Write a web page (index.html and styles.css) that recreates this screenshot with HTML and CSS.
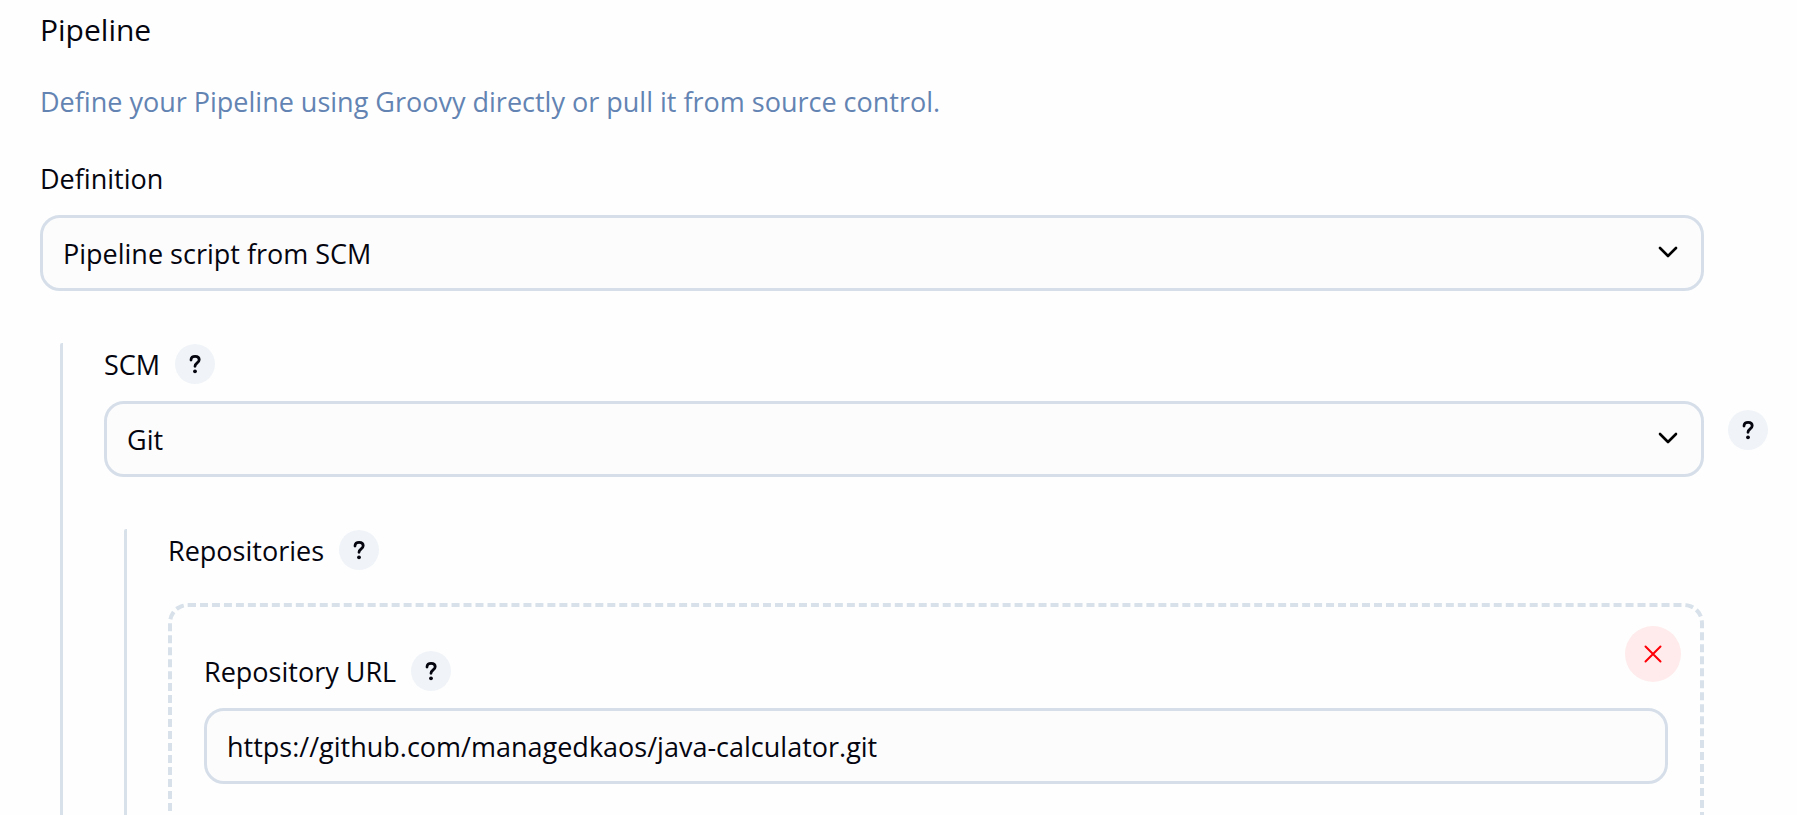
FILE: index.html
```html
<!DOCTYPE html>
<html lang="en">
<head>
<meta charset="utf-8">
<title>Pipeline</title>
<link rel="stylesheet" href="styles.css">
</head>
<body>
<svg class="symbols" aria-hidden="true">
  <symbol id="icon-chevron" viewBox="0 0 24 24">
    <path d="M4 8l8 8 8-8" fill="none" stroke="currentColor" stroke-width="2.600" stroke-linecap="round" stroke-linejoin="round"/>
  </symbol>
  <symbol id="icon-help" viewBox="0 0 24 24">
    <path d="M8 8C8 5.400 9.700 4.300 12.100 4.300C14.700 4.300 16.200 5.700 16.200 7.800C16.200 10.900 12 11 12 14.300" fill="none" stroke="currentColor" stroke-width="2.800" stroke-linecap="round" stroke-linejoin="round"/>
    <circle cx="12" cy="19.300" r="1.900" fill="currentColor"/>
  </symbol>
  <symbol id="icon-close" viewBox="0 0 24 24">
    <path d="M4.500 4.500l15 15M19.500 4.500l-15 15" fill="none" stroke="currentColor" stroke-width="2" stroke-linecap="round"/>
  </symbol>
</svg>
<main class="page">
  <h1 class="title">Pipeline</h1>
  <p class="description">Define your Pipeline using Groovy directly or pull it from source control.</p>

  <label class="definition-label" for="definition">Definition</label>
  <div class="select">
    <select class="control" id="definition"><option>Pipeline script from SCM</option></select>
    <svg class="chevron"><use href="#icon-chevron"/></svg>
  </div>

  <section class="group">
    <div class="label-row">
      <label class="label" for="scm">SCM</label>
      <button class="help" type="button" aria-label="Help for SCM"><svg class="icon"><use href="#icon-help"/></svg></button>
    </div>
    <div class="select-row">
      <div class="select">
        <select class="control" id="scm"><option>Git</option></select>
        <svg class="chevron"><use href="#icon-chevron"/></svg>
      </div>
      <button class="help" type="button" aria-label="Help for Git"><svg class="icon"><use href="#icon-help"/></svg></button>
    </div>

    <section class="group">
      <div class="label-row">
        <span class="label">Repositories</span>
        <button class="help" type="button" aria-label="Help for Repositories"><svg class="icon"><use href="#icon-help"/></svg></button>
      </div>
      <div class="repository">
        <button class="remove" type="button" aria-label="Remove repository"><svg class="icon"><use href="#icon-close"/></svg></button>
        <div class="label-row">
          <label class="label" for="url">Repository URL</label>
          <button class="help" type="button" aria-label="Help for Repository URL"><svg class="icon"><use href="#icon-help"/></svg></button>
        </div>
        <input class="control" id="url" type="text" value="https://github.com/managedkaos/java-calculator.git" spellcheck="false">
      </div>
    </section>
  </section>
</main>
</body>
</html>
```
FILE: styles.css
```css
* {
  box-sizing: border-box;
}

body {
  margin: 0;
  background: #fefefe;
  color: #05050f;
  font: 27px/36px "Segoe UI", "Open Sans", "Noto Sans", sans-serif;
}

.symbols {
  position: absolute;
  width: 0;
  height: 0;
}

.page {
  height: 100vh;
  overflow: hidden;
  padding: 10px 93px 0 40px;
}

.title {
  margin: 0;
  font-size: 30px;
  font-weight: 400;
  line-height: 40px;
}

.description {
  margin: 34px 0 41px;
  color: #6384b3;
}

.definition-label {
  display: block;
  margin-bottom: 18px;
}

.control {
  display: block;
  width: 100%;
  height: 76px;
  margin: 0;
  padding: 0 20px;
  appearance: none;
  border: 3px solid #d6dfe9;
  border-radius: 20px;
  outline: none;
  background: #fcfcfd;
  color: inherit;
  font: inherit;
}

.select {
  position: relative;
  flex: 1;
}

.select .control {
  padding-top: 2px;
}

.chevron {
  position: absolute;
  top: 25px;
  right: 24px;
  width: 24px;
  height: 24px;
  color: #000;
  pointer-events: none;
}

.group {
  margin: 52px 0 0 20px;
  padding: 1px 0 0 41px;
  border-left: 3px solid #d8e1ea;
  border-top-left-radius: 2px;
}

.label-row {
  display: flex;
  align-items: center;
  gap: 15px;
  margin-bottom: 17px;
}

.label {
  padding-top: 2px;
}

.help,
.remove {
  display: flex;
  align-items: center;
  justify-content: center;
  padding: 0;
  border: 0;
  border-radius: 50%;
}

.help {
  width: 40px;
  height: 40px;
  background: #f0f4f8;
  color: #05050f;
}

.icon {
  width: 24px;
  height: 24px;
}

.select-row {
  display: flex;
  gap: 24px;
  margin-right: -64px;
}

.select-row .help {
  margin-top: 9px;
}

.repository {
  position: relative;
  margin-top: 33px;
  padding: 44px 32px 64px;
  border: 4px dashed #d8e1ea;
  border-radius: 20px;
}

.remove {
  position: absolute;
  top: 19px;
  right: 19px;
  width: 56px;
  height: 56px;
  background: #ffebeb;
  color: #ff0008;
}
```
